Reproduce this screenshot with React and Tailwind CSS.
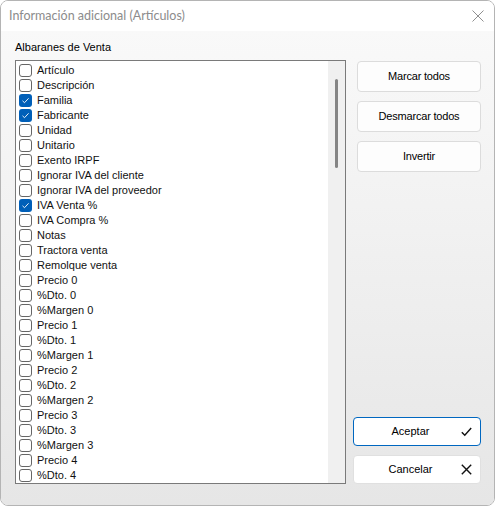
const items = [
  ["Artículo", false],
  ["Descripción", false],
  ["Familia", true],
  ["Fabricante", true],
  ["Unidad", false],
  ["Unitario", false],
  ["Exento IRPF", false],
  ["Ignorar IVA del cliente", false],
  ["Ignorar IVA del proveedor", false],
  ["IVA Venta %", true],
  ["IVA Compra %", false],
  ["Notas", false],
  ["Tractora venta", false],
  ["Remolque venta", false],
  ["Precio 0", false],
  ["%Dto. 0", false],
  ["%Margen 0", false],
  ["Precio 1", false],
  ["%Dto. 1", false],
  ["%Margen 1", false],
  ["Precio 2", false],
  ["%Dto. 2", false],
  ["%Margen 2", false],
  ["Precio 3", false],
  ["%Dto. 3", false],
  ["%Margen 3", false],
  ["Precio 4", false],
  ["%Dto. 4", false],
];

function CheckBox({ checked }) {
  if (checked) {
    return (
      <span className="w-[13px] h-[13px] rounded-[3px] bg-[#005fb8] flex items-center justify-center shrink-0">
        <svg width="9" height="9" viewBox="0 0 9 9" fill="none">
          <path d="M1.5 4.8 L3.5 6.7 L7.6 2.3" stroke="white" strokeWidth="0.9" />
        </svg>
      </span>
    );
  }
  return <span className="w-[13px] h-[13px] rounded-[3px] border border-[#666] bg-white shrink-0" />;
}

function Button({ children }) {
  return (
    <button className="w-[124px] h-[31px] rounded-[4px] border border-[#dcdcdc] bg-[#fdfdfd] text-[11px] tracking-[-0.2px] text-black">
      {children}
    </button>
  );
}

export default function App() {
  return (
    <div
      className="w-[495px] h-[506px] rounded-[8px] border border-[#b4b4b4] overflow-hidden flex flex-col bg-white"
      style={{ fontFamily: '"Liberation Sans", Arial, sans-serif' }}
    >
      <div className="h-[30px] bg-white flex items-center justify-between pl-[8px] pr-[10px] shrink-0">
        <span className="text-[12.5px] text-[#8c8c8c]" style={{ fontFamily: 'Lato, sans-serif' }}>
          Información adicional (Artículos)
        </span>
        <svg width="12" height="12" viewBox="0 0 12 12">
          <path d="M0.5 0.5 L11.5 11.5 M11.5 0.5 L0.5 11.5" stroke="#8f8f8f" strokeWidth="1" />
        </svg>
      </div>

      <div className="flex-1 bg-gradient-to-b from-[#f9f9f9] to-[#e6e6e6] pl-[14px] pt-[9px] flex flex-col">
        <div className="text-[11px] text-black leading-[14px] h-[20px]">Albaranes de Venta</div>
        <div className="flex">
          <div className="w-[331px] h-[424px] border border-[#7a7a7a] bg-white flex">
            <div className="flex-1 pt-[2px] pl-[3px] overflow-hidden">
              {items.map(([label, checked]) => (
                <div key={label} className="h-[15px] flex items-center gap-[5px]">
                  <CheckBox checked={checked} />
                  <span className="text-[11px] leading-[15px] text-[#111]">{label}</span>
                </div>
              ))}
            </div>
            <div className="w-[17px] bg-[#f0f0f0] pt-[18px] flex justify-center">
              <div className="w-[3px] h-[89px] rounded-full bg-[#858585]" />
            </div>
          </div>

          <div className="flex-1 flex flex-col pl-[11px] pt-[1px]">
            <div className="flex flex-col gap-[9px]">
              <Button>Marcar todos</Button>
              <Button>Desmarcar todos</Button>
              <Button>Invertir</Button>
            </div>
            <div className="mt-auto -ml-[4px] flex flex-col gap-[9px]">
              <button className="w-[128px] h-[29px] rounded-[4px] border border-[#0067c0] bg-white text-[11px] text-black flex items-center">
                <span className="flex-1 text-center pl-[6px]">Aceptar</span>
                <svg className="mr-[8px]" width="11" height="10" viewBox="0 0 11 10" fill="none">
                  <path d="M0.8 5.2 L3.8 8.3 L10.2 1" stroke="#111" strokeWidth="1.4" />
                </svg>
              </button>
              <button className="w-[128px] h-[29px] rounded-[4px] border border-[#e0e0e0] bg-white text-[11px] text-black flex items-center">
                <span className="flex-1 text-center pl-[6px]">Cancelar</span>
                <svg className="mr-[8px]" width="11" height="11" viewBox="0 0 11 11" fill="none">
                  <path d="M0.8 0.8 L10.2 10.2 M10.2 0.8 L0.8 10.2" stroke="#111" strokeWidth="1.4" />
                </svg>
              </button>
            </div>
          </div>
        </div>
      </div>
    </div>
  );
}
